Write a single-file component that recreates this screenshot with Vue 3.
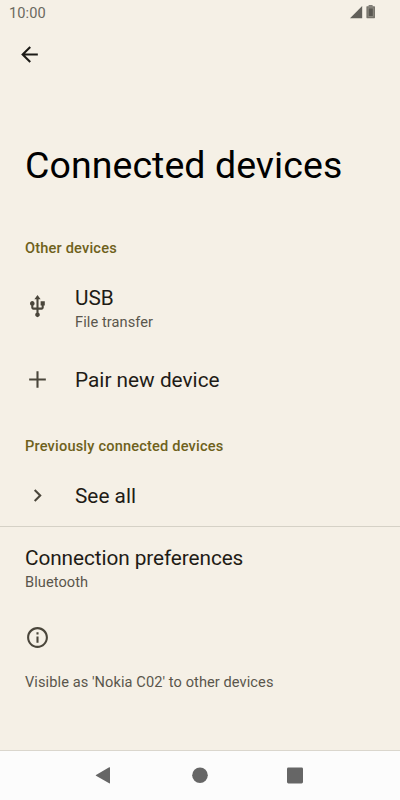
<script setup>
const other = [
  { id: 'usb', title: 'USB', summary: 'File transfer' },
  { id: 'pair', title: 'Pair new device' },
]
</script>

<template>
  <div class="screen">
    <header class="status">
      <span class="clock">10:00</span>
      <svg class="status-icons" width="26" height="16" viewBox="0 0 26 16">
        <path d="M0 13.2 12.2 1v12.2z" fill="#62605a" />
        <path d="M18.6 0.2h4v1.2h-4z" fill="#62605a" />
        <rect x="16.4" y="1.2" width="8.6" height="12" rx="0.6" fill="#77746c" />
        <rect x="18.2" y="3" width="5" height="8.6" fill="#5a5852" stroke="#9a978d" stroke-width="0.7" />
      </svg>
    </header>

    <div class="toolbar">
      <svg width="25" height="25" viewBox="0 0 24 24" fill="#1c1b17">
        <path d="M20 11H7.83l5.59-5.59L12 4l-8 8 8 8 1.41-1.41L7.83 13H20z" />
      </svg>
    </div>

    <h1 class="title">Connected devices</h1>

    <h2 class="category first">Other devices</h2>
    <div v-for="item in other" :key="item.id" class="row" :class="item.id">
      <svg v-if="item.id === 'usb'" class="icon" width="25" height="25" viewBox="0 0 24 24">
        <path d="M15 7v4h1v2h-3V5h2l-3-4-3 4h2v8H8v-2.07c.7-.37 1.2-1.08 1.2-1.93 0-1.21-.99-2.2-2.2-2.2-1.21 0-2.2.99-2.2 2.2 0 .85.5 1.56 1.2 1.93V13c0 1.11.89 2 2 2h3v3.05c-.71.37-1.2 1.1-1.2 1.95 0 1.22.99 2.2 2.2 2.2 1.21 0 2.2-.98 2.2-2.2 0-.85-.49-1.58-1.2-1.95V15h3c1.11 0 2-.89 2-2v-2h1V7h-4z" />
      </svg>
      <svg v-else class="icon" width="25" height="25" viewBox="0 0 24 24">
        <path d="M20 13h-7v7h-2v-7H4v-2h7V4h2v7h7z" />
      </svg>
      <div class="text">
        <div class="name">{{ item.title }}</div>
        <div v-if="item.summary" class="summary">{{ item.summary }}</div>
      </div>
    </div>

    <h2 class="category">Previously connected devices</h2>
    <div class="row all">
      <svg class="icon" width="25" height="25" viewBox="0 0 24 24">
        <path d="M10 6 8.59 7.41 13.17 12l-4.58 4.59L10 18l6-6z" />
      </svg>
      <div class="name">See all</div>
    </div>

    <div class="prefs">
      <div class="name">Connection preferences</div>
      <div class="summary">Bluetooth</div>
    </div>

    <footer class="info">
      <svg class="icon" width="25" height="25" viewBox="0 0 24 24">
        <path d="M11 7h2v2h-2zm0 4h2v6h-2zm1-9C6.48 2 2 6.48 2 12s4.48 10 10 10 10-4.48 10-10S17.52 2 12 2zm0 18c-4.41 0-8-3.59-8-8s3.59-8 8-8 8 3.59 8 8-3.59 8-8 8z" />
      </svg>
      <p class="summary">Visible as 'Nokia C02' to other devices</p>
    </footer>

    <nav class="nav">
      <svg width="17" height="18" viewBox="0 0 17 18"><path d="M15 1.8v15q0 .9-.8.4L1 9.7Q.4 9.3 1 8.9L14.2 1.3Q15 .9 15 1.8z" /></svg>
      <svg width="16" height="18" viewBox="0 0 16 18"><circle cx="8" cy="9.2" r="7.8" /></svg>
      <svg width="16" height="18" viewBox="0 0 16 18"><rect y="1.4" width="16" height="16" rx="1.4" /></svg>
    </nav>
  </div>
</template>

<style>
body {
  background: #f5f0e6;
}
</style>

<style scoped>
.screen {
  display: flex;
  flex-direction: column;
  box-sizing: border-box;
  width: 400px;
  height: 800px;
  overflow: hidden;
  background: #f5f0e6;
  font-family: Roboto, sans-serif;
  color: #1f1c16;
}
.status {
  display: flex;
  justify-content: space-between;
  height: 25px;
  padding: 0 24px 0 9px;
  flex: none;
}
.clock {
  font-size: 14.6px;
  line-height: 26px;
  letter-spacing: 0.1px;
  color: #6b6860;
}
.status-icons {
  margin-top: 5px;
}
.toolbar {
  display: flex;
  align-items: center;
  height: 58px;
  padding-left: 16.5px;
}
.title {
  margin: 60px 0 0 25px;
  font-size: 37.5px;
  line-height: 44px;
  letter-spacing: 0.06px;
  font-weight: 400;
  color: #000;
  white-space: nowrap;
}
.category {
  margin: 0 0 0 25px;
  font-size: 14.6px;
  line-height: 20px;
  letter-spacing: 0.18px;
  font-weight: 500;
  color: #6e611b;
}
.first {
  margin-top: 51px;
}
.row {
  display: flex;
  align-items: center;
  gap: 25px;
  padding-left: 25px;
}
.icon {
  display: block;
  flex: none;
  fill: #4a463b;
}
.usb {
  height: 96px;
  box-sizing: border-box;
  align-items: flex-start;
  padding-top: 27px;
}
.usb .icon {
  margin-top: 9px;
}
.pair {
  height: 52px;
  margin-bottom: 30px;
}
.pair .icon {
  margin-top: -1px;
}
.name {
  font-size: 20.8px;
  line-height: 26px;
}
.summary {
  margin-top: -1px;
  font-size: 14.6px;
  line-height: 24px;
  letter-spacing: 0.08px;
  color: #5a564c;
}
.all {
  height: 71px;
  border-bottom: 1px solid #d5d1c6;
  box-sizing: border-box;
  padding-top: 9px;
}
.all .icon {
  margin-top: -1px;
}
.prefs {
  padding: 18px 25px 0;
}
.prefs .name {
  letter-spacing: -0.09px;
}
.info {
  padding: 31px 25px 0;
}
.info .summary {
  margin: 20px 0 0;
}
.nav {
  display: flex;
  justify-content: space-between;
  box-sizing: border-box;
  height: 50px;
  flex: none;
  margin-top: auto;
  padding: 15px 97px 0 95px;
  border-top: 1px solid #dad6cd;
  background: #fcfcfc;
  fill: #666;
}
</style>
